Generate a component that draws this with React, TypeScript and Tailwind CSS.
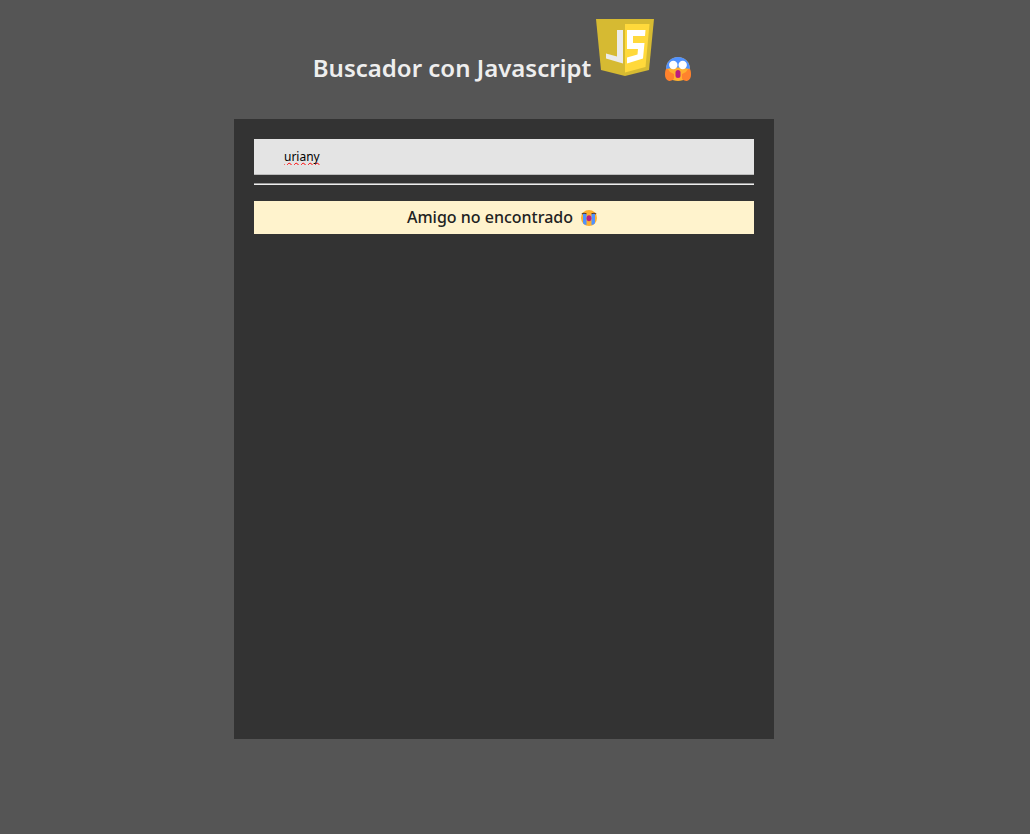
import { useState } from "react";

function JsLogo() {
  return (
    <svg className="h-[58px] w-[58px] shrink-0" viewBox="0 0 58 58" role="img" aria-label="JS">
      <path d="M0 0H58L53 51L29 57L5 51Z" fill="#d6ba32" />
      <path d="M29 5H53.5L49.5 48L29 53.5Z" fill="#ffd93b" />
      <path d="M21 11H27V44.5L10 39.5V34.5L21 37.5Z" fill="#ebebeb" />
      <path d="M31 11H49.5L49 17H37V24H48.5L47 39.5L31 44.5V38.5L41.5 35.5L42 30H31Z" fill="#fff" />
    </svg>
  );
}

function ScreamFace() {
  return (
    <svg className="h-[26px] w-[26px] shrink-0" viewBox="0 0 26 26" role="img" aria-label="Cara de asombro">
      <circle cx="13" cy="12" r="12" fill="#ffb02e" />
      <path d="M1 12C1 5 6 0 13 0S25 5 25 12Q13 9 1 12Z" fill="#5092ff" />
      <circle cx="8.3" cy="8" r="4.2" fill="#fff" />
      <circle cx="17.7" cy="8" r="4.2" fill="#fff" />
      <path d="M1 12C3 11 4 14 5 15L9 17V21C9 23 6 24 4 24C1 23 0 20 0 18C0 16 0 14 1 12Z" fill="#ff822d" />
      <path d="M25 12C23 11 22 14 21 15L17 17V21C17 23 20 24 22 24C25 23 26 20 26 18C26 16 26 14 25 12Z" fill="#ff822d" />
      <rect x="10.5" y="13" width="5" height="8" rx="2.5" fill="#bb1d80" />
    </svg>
  );
}

function CryingFace() {
  return (
    <svg className="h-4 w-4 shrink-0" viewBox="0 0 16 16" role="img" aria-label="Cara llorando">
      <circle cx="8" cy="8" r="8" fill="#ffb02e" />
      <path d="M2 4H5.5V15L3.5 14.6C2.3 14 2 13 2 12ZM10.5 4H14V12C14 13 13.7 14 12.5 14.6L10.5 15Z" fill="#5092ff" />
      <path d="M.8 4.2Q2.5 2.5 5.5 3.8M10.5 3.8Q13.5 2.5 15.2 4.2" fill="none" stroke="#493638" strokeWidth="1.1" />
      <ellipse cx="8" cy="8.3" rx="2.4" ry="3" fill="#bb1d80" />
    </svg>
  );
}

export default function App() {
  const [query, setQuery] = useState("uriany");

  return (
    <div className="min-h-screen bg-[#555555] pt-[19px] pr-[22px] font-['Noto_Sans',sans-serif]">
      <h1 className="flex items-end justify-center pr-1 text-[24px] leading-[32px] font-semibold text-[#eeeeee]">
        <span className="pb-px">Buscador con Javascript</span>
        <span className="ml-[5px] pb-2">
          <JsLogo />
        </span>
        <span className="ml-[11px] pb-[2px]">
          <ScreamFace />
        </span>
      </h1>
      <main className="mx-auto mt-[34px] min-h-[620px] w-full max-w-[540px] bg-[#333333] p-5">
        <input
          type="text"
          aria-label="Buscar amigo"
          spellCheck={false}
          value={query}
          onChange={(e) => setQuery(e.target.value)}
          className="block h-9 w-full border-b border-[#bbbbbb] bg-[#e4e4e4] px-[30px] text-[12px] text-black underline decoration-[#ff0000] decoration-wavy decoration-1 outline-none [text-decoration-skip-ink:none]"
        />
        <hr className="mt-2 h-[2px] border-t border-[#9a9a9a] bg-[#eeeeee]" />
        <p className="mt-4 flex items-center justify-center gap-2 bg-[#fff3cd] pr-1 text-[16px] leading-[33px] font-medium text-[#222222]">
          Amigo no encontrado
          <CryingFace />
        </p>
      </main>
    </div>
  );
}
